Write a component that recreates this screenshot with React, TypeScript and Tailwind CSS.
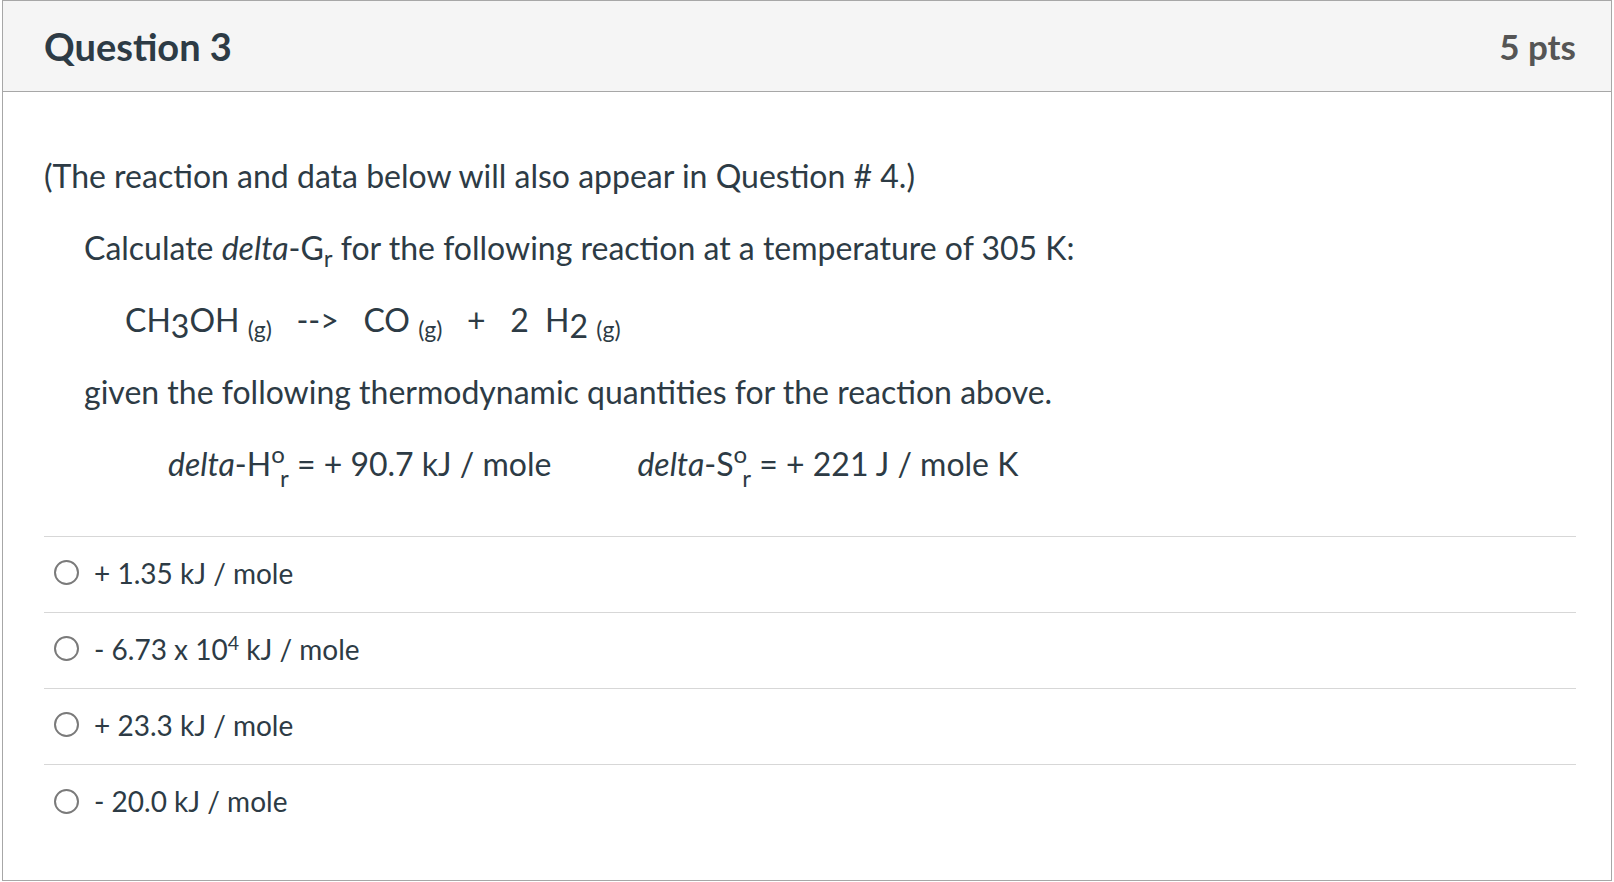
import React from 'react';

const answers: React.ReactNode[] = [
  <>+ 1.35 kJ / mole</>,
  <>
    - 6.73 x 10<sup className="text-[0.7em] leading-[0] top-0 align-[0.5em]">4</sup> kJ / mole
  </>,
  <>+ 23.3 kJ / mole</>,
  <>- 20.0 kJ / mole</>,
];

// phase label after a species, e.g. (g)
const Phase: React.FC = () => <span className="text-[0.72em] leading-[0] align-[-0.25em]">(g)</span>;

// index that sits a little below the baseline (CH3, H2)
const Idx: React.FC<{ children: React.ReactNode }> = ({ children }) => (
  <span className="leading-[0] align-[-0.2em]">{children}</span>
);

// standard-state mark with a reaction subscript: °r
const StdR: React.FC = () => (
  <>
    <span className="text-[0.75em] leading-[0] align-[0.55em]">o</span>
    <span className="text-[0.75em] leading-[0] align-[-0.45em] -ml-[0.2em]">r</span>
  </>
);

export default function App() {
  return (
    <div className="w-[1614px] h-[882px] bg-white" style={{ fontFamily: 'Lato, "Open Sans", sans-serif' }}>
      <div className="ml-[2px] w-[1610px] h-[881px] border border-[#a7a7a7] text-[#2d3b45] flex flex-col">
        <div className="h-[91px] bg-[#f5f5f5] border-b border-[#a7a7a7] flex items-center justify-between pl-[41px] pr-[35px]">
          <h2 className="text-[38px] font-bold">Question 3</h2>
          <span className="text-[35px] font-bold text-[#555]">5 pts</span>
        </div>

        <div className="flex-1 pl-[41px] pr-[35px] pt-[64px] text-[32px] leading-[40px]">
          <p>(The reaction and data below will also appear in Question # 4.)</p>

          <div className="pl-[40px] flex flex-col gap-[32px] mt-[32px]">
            <p>
              Calculate <i>delta</i>-G<span className="text-[0.75em] leading-[0] align-[-0.3em]">r</span> for the
              following reaction at a temperature of 305 K:
            </p>
            <p className="pl-[41px] whitespace-pre">
              CH<Idx>3</Idx>OH <Phase />{'   '}--&gt;{'   '}CO <Phase />{'   +   '}2{'  '}H<Idx>2</Idx>{' '}
              <Phase />
            </p>
            <p>given the following thermodynamic quantities for the reaction above.</p>
            <p className="pl-[84px] flex gap-[86px] whitespace-pre">
              <span>
                <i>delta</i>-H<StdR /> = + 90.7 kJ / mole
              </span>
              <span>
                <i>delta</i>-S<StdR /> = + 221 J / mole K
              </span>
            </p>
          </div>

          <div className="mt-[52px] border-t border-[#d7d7d7]">
            {answers.map((a, i) => (
              <label
                key={i}
                className={`flex items-center h-[76px] pb-[4px] ${i < answers.length - 1 ? 'border-b border-[#d7d7d7]' : ''}`}
              >
                <span className="ml-[10px] w-[25px] h-[25px] rounded-full border-2 border-[#7a7a7a] bg-white shrink-0" />
                <span className="ml-[15px] text-[28px]">{a}</span>
              </label>
            ))}
          </div>
        </div>
      </div>
    </div>
  );
}
